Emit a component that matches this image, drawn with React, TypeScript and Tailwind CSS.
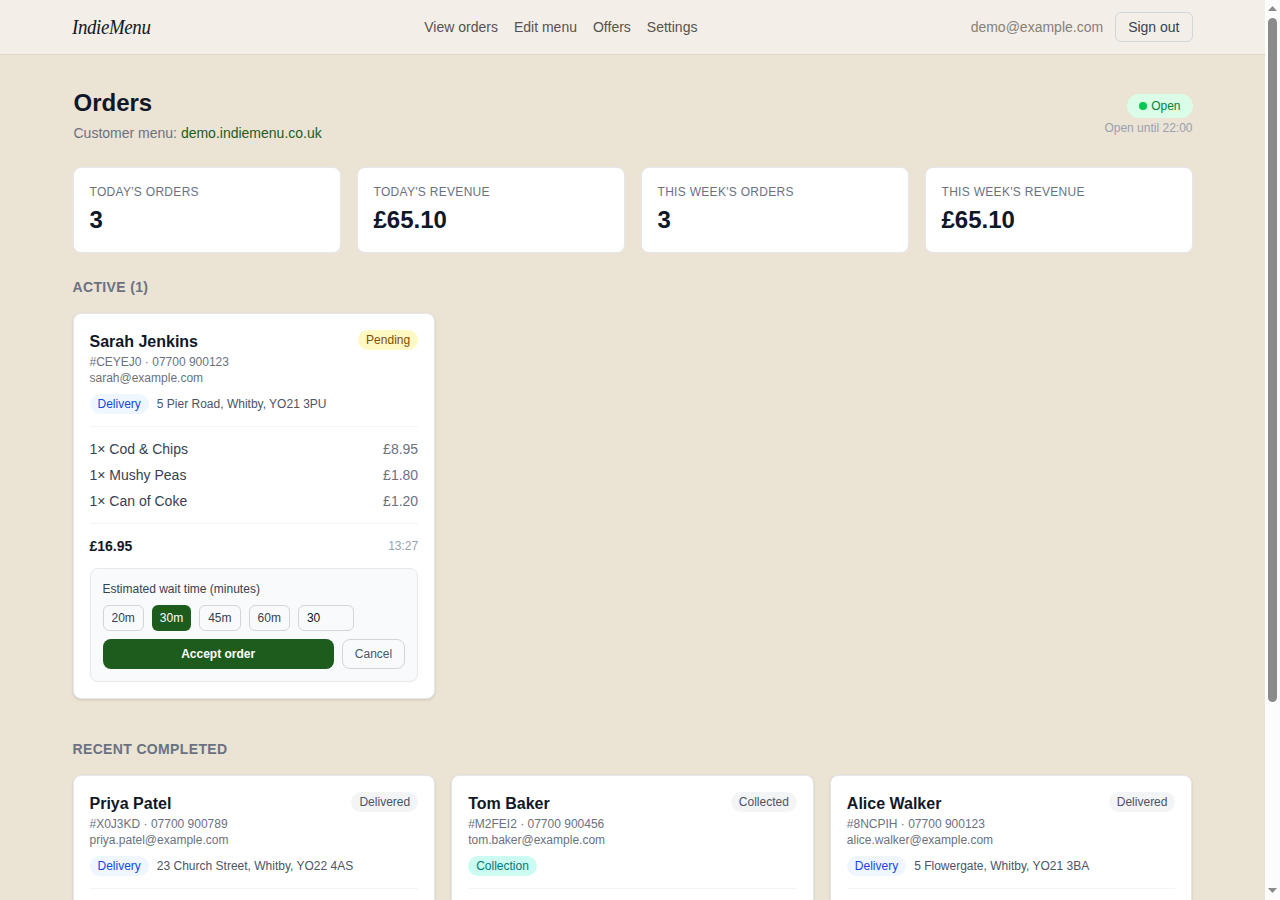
import React from "react";

type Order = {
  name: string;
  code: string;
  phone: string;
  email: string;
  kind: "Delivery" | "Collection";
  address?: string;
  status: "Pending" | "Delivered" | "Collected";
};

const active: Order = {
  name: "Sarah Jenkins",
  code: "#CEYEJ0",
  phone: "07700 900123",
  email: "sarah@example.com",
  kind: "Delivery",
  address: "5 Pier Road, Whitby, YO21 3PU",
  status: "Pending",
};

const recent: Order[] = [
  { name: "Priya Patel", code: "#X0J3KD", phone: "07700 900789", email: "priya.patel@example.com", kind: "Delivery", address: "23 Church Street, Whitby, YO22 4AS", status: "Delivered" },
  { name: "Tom Baker", code: "#M2FEI2", phone: "07700 900456", email: "tom.baker@example.com", kind: "Collection", status: "Collected" },
  { name: "Alice Walker", code: "#8NCPIH", phone: "07700 900123", email: "alice.walker@example.com", kind: "Delivery", address: "5 Flowergate, Whitby, YO21 3BA", status: "Delivered" },
];

const items = [
  ["1× Cod & Chips", "£8.95"],
  ["1× Mushy Peas", "£1.80"],
  ["1× Can of Coke", "£1.20"],
];

const stats = [
  ["Today's orders", "3"],
  ["Today's revenue", "£65.10"],
  ["This week's orders", "3"],
  ["This week's revenue", "£65.10"],
];

const statusClass = {
  Pending: "bg-yellow-100 text-yellow-800",
  Delivered: "bg-gray-100 text-gray-600",
  Collected: "bg-gray-100 text-gray-600",
};

const kindClass = {
  Delivery: "bg-blue-50 text-blue-700",
  Collection: "bg-teal-100 text-teal-700",
};

function OrderCard({ order, children }: { order: Order; children?: React.ReactNode }) {
  return (
    <article className="rounded-lg border border-gray-200 bg-white p-4 shadow-sm">
      <div className="flex items-start justify-between">
        <div>
          <h3 className="font-semibold text-gray-900">{order.name}</h3>
          <p className="text-xs text-gray-500">{order.code} · {order.phone}</p>
          <p className="text-xs text-gray-500">{order.email}</p>
        </div>
        <span className={`rounded-full px-2 py-0.5 text-xs ${statusClass[order.status]}`}>{order.status}</span>
      </div>
      <div className="mt-2 flex items-center gap-2 text-xs">
        <span className={`rounded-full px-2 py-0.5 ${kindClass[order.kind]}`}>{order.kind}</span>
        {order.address && <span className="text-gray-600">{order.address}</span>}
      </div>
      <div className="mt-3 min-h-12 border-t border-gray-100">{children}</div>
    </article>
  );
}

function WaitButton({ label, selected = false }: { label: string; selected?: boolean }) {
  return (
    <button
      className={
        selected
          ? "rounded-md bg-[#1e5c1e] px-2 py-1 text-white"
          : "rounded-md border border-gray-300 px-2 py-1 text-gray-700"
      }
    >
      {label}
    </button>
  );
}

export default function App() {
  return (
    <div className="flex h-[900px] overflow-hidden bg-[#ebe3d4] font-['Liberation_Sans',Arial,sans-serif]">
      <div className="min-w-0 flex-1">
        <header className="border-b border-[#ddd6c8] bg-[#f3eee7]">
          <div className="mx-auto flex max-w-6xl items-center justify-between px-4 py-3">
            <div className="h-7 w-[78.6px] shrink-0">
              <span className="-ml-px inline-block origin-left scale-x-[0.9] whitespace-nowrap font-['Liberation_Serif',serif] text-[21px] leading-7 tracking-[-0.02em] text-gray-900 italic">
                IndieMenu
              </span>
            </div>
            <nav className="flex gap-4 text-sm text-[#57534e]">
              <a>View orders</a>
              <a>Edit menu</a>
              <a>Offers</a>
              <a>Settings</a>
            </nav>
            <div className="flex items-center gap-3 text-sm">
              <span className="text-[#85817a]">demo@example.com</span>
              <button className="rounded-md border border-gray-300 px-3 py-1 text-gray-700">Sign out</button>
            </div>
          </div>
        </header>

        <main className="mx-auto max-w-6xl px-4 py-8">
          <div className="mb-6 flex items-center justify-between">
            <div className="pl-px">
              <h1 className="text-2xl font-bold text-gray-900">Orders</h1>
              <p className="mt-1 text-sm text-gray-500">
                Customer menu: <a className="text-[#1e5c1e]">demo.indiemenu.co.uk</a>
              </p>
            </div>
            <div className="flex flex-col items-end gap-0.5 text-xs">
              <span className="flex items-center gap-1 rounded-full bg-green-100 px-3 py-1 text-green-700">
                <span className="size-2 rounded-full bg-green-500" />
                Open
              </span>
              <span className="text-gray-400">Open until 22:00</span>
            </div>
          </div>

          <section className="mb-6 grid grid-cols-4 gap-4">
            {stats.map(([label, value]) => (
              <div key={label} className="rounded-lg border border-gray-200 bg-white p-4">
                <p className="text-xs tracking-wide text-gray-500 uppercase">{label}</p>
                <p className="mt-1 text-2xl font-bold text-gray-900">{value}</p>
              </div>
            ))}
          </section>

          <section className="mb-10">
            <h2 className="mb-4 text-sm font-semibold tracking-wide text-gray-500 uppercase">Active (1)</h2>
            <div className="grid grid-cols-3 gap-4">
              <OrderCard order={active}>
                <ul className="space-y-1.5 py-3 text-sm">
                  {items.map(([name, price]) => (
                    <li key={name} className="flex justify-between">
                      <span className="text-gray-700">{name}</span>
                      <span className="text-gray-500">{price}</span>
                    </li>
                  ))}
                </ul>
                <div className="flex items-center justify-between border-t border-gray-100 pt-3">
                  <span className="text-sm font-bold text-gray-900">£16.95</span>
                  <span className="text-xs text-gray-400">13:27</span>
                </div>
                <div className="mt-3 rounded-lg border border-gray-200 bg-gray-50 p-3 text-xs">
                  <p className="text-gray-700">Estimated wait time (minutes)</p>
                  <div className="mt-2 flex gap-2">
                    <WaitButton label="20m" />
                    <WaitButton label="30m" selected />
                    <WaitButton label="45m" />
                    <WaitButton label="60m" />
                    <input className="w-14 rounded-md border border-gray-300 px-2 py-1 text-gray-900" defaultValue="30" />
                  </div>
                  <div className="mt-2 flex gap-2">
                    <button className="flex-1 rounded-lg bg-[#1e5c1e] py-1.5 font-semibold text-white">Accept order</button>
                    <button className="rounded-lg border border-gray-300 px-3 py-1.5 text-gray-600">Cancel</button>
                  </div>
                </div>
              </OrderCard>
            </div>
          </section>

          <section>
            <h2 className="mb-4 text-sm font-semibold tracking-wide text-gray-500 uppercase">Recent completed</h2>
            <div className="grid grid-cols-3 gap-4">
              {recent.map((order) => (
                <OrderCard key={order.code} order={order}>
                  <div className="h-32" />
                </OrderCard>
              ))}
            </div>
          </section>
        </main>
      </div>

      <div className="flex w-[15px] shrink-0 flex-col items-center bg-[#fcfcfc]">
        <svg className="mt-1.5 h-[5px] w-[9px] shrink-0" viewBox="0 0 9 5" fill="#8b8b8b">
          <path d="M4.5 0 9 5H0z" />
        </svg>
        <div className="mt-[7px] h-[684px] w-[9px] shrink-0 rounded-full bg-[#8b8b8b]" />
        <svg className="mt-auto mb-[7px] h-[5px] w-[9px] shrink-0" viewBox="0 0 9 5" fill="#8b8b8b">
          <path d="M0 0H9L4.5 5z" />
        </svg>
      </div>
    </div>
  );
}
